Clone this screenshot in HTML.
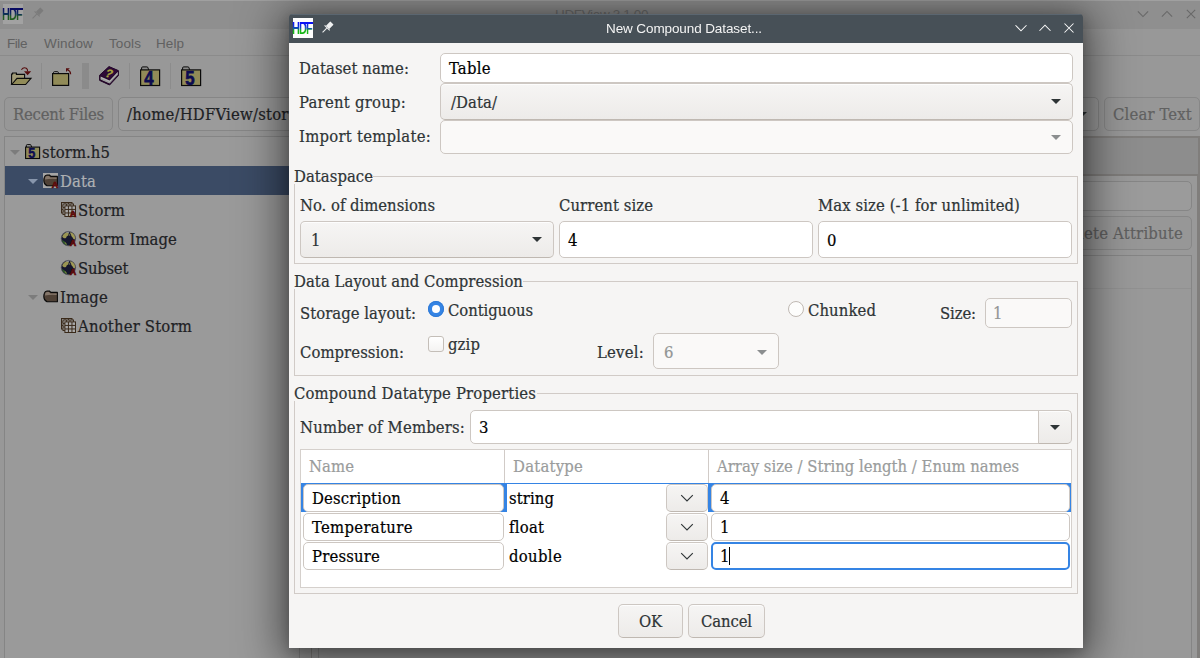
<!DOCTYPE html>
<html lang="en">
<head>
<meta charset="utf-8">
<title>New Compound Dataset...</title>
<style>
*{box-sizing:border-box;margin:0;padding:0}
html,body{width:1200px;height:658px;overflow:hidden;background:#989898}
body{position:relative;font-family:"DejaVu Serif Condensed","DejaVu Serif","Liberation Serif",serif;font-size:16.5px;line-height:20px;color:#2e3436;-webkit-text-stroke:.2px}
body *{position:absolute;white-space:nowrap}
.sans{font-family:"Liberation Sans","DejaVu Sans",sans-serif;font-size:13.5px;-webkit-text-stroke:0}
svg{overflow:visible;-webkit-text-stroke:0}
#bg{left:0;top:0;width:1200px;height:658px;overflow:hidden;color:#1e2124}
#top{left:0;top:0;width:0;height:0}
.bb{border:1px solid #878787;border-radius:5px;background:#979797;color:#6a6a6a}
.bf{border:1px solid #868686;border-radius:5px;background:#9b9b9b}
.vs{top:63px;width:1px;height:26px;background:#8c8c8c}
.mn{color:#616161}
#sh{left:291px;top:16px;width:790px;height:630px;background:#475057;border-radius:2px 2px 0 0;box-shadow:0 3px 12px 3px rgba(0,0,0,.17),0 6px 44px 10px rgba(0,0,0,.52)}
#dlg{left:0;top:0;width:1200px;height:658px;clip-path:inset(14px 117px 10px 289px round 4px 4px 0 0)}
.tb{background:#475057;border-top:1px solid #5b6670}
.e{background:#fff;border:1px solid #cdc7c2;border-radius:5px}
.b{background:linear-gradient(#f6f5f4,#edebe9);border:1px solid #cdc7c2;border-bottom-color:#bfb8b1;border-radius:5px;box-shadow:inset 0 1px rgba(255,255,255,.8)}
.d{background:#faf9f8;border:1px solid #cdc7c2;border-radius:5px}
.k{color:#000}
.g{color:#929595}
.h{color:#9a9c9c}
.l{background:#d1cbc7}
.ar{width:0;height:0;border-left:5px solid transparent;border-right:5px solid transparent;border-top:5px solid #2e3436}
.ag{border-top-color:#8b8e8f}
.bl{background:#3584e4}
.lg{font:bold 15.6px/20px "Liberation Sans","DejaVu Sans",sans-serif;letter-spacing:-1.3px;width:30px;height:20px;transform:scaleX(.7);transform-origin:0 0;background:linear-gradient(#0a12f5 22%,#0d45c0 45%,#14b414 58%);-webkit-background-clip:text;background-clip:text;color:transparent;-webkit-text-stroke:0;will-change:transform}
.lgd{background-image:linear-gradient(#070a62 22%,#0d2f5a 45%,#1f5a1f 58%)}
</style>
</head>
<body>
<div id="bg">
<div style="left:0px;top:0px;width:1200px;height:29px;background:#8f8f8f"></div>
<div style="left:0px;top:0px;width:1200px;height:1px;background:#a0a0a0"></div>
<div style="left:3px;top:4px;width:20px;height:20px;background:#a2a2a2"></div><div style="left:10px;top:8px;width:13px;height:2px;background:#070a62"></div>
<svg style="left:29.200000000000003px;top:6px" width="16" height="16" viewBox="0 0 16 16"><g transform="translate(8 8) scale(0.82) rotate(45) translate(-8 -8)" fill="#7b7b7b" stroke="none"><rect x="5.2" y="-0.5" width="5.6" height="7.6" rx="0.6"/><rect x="3.6" y="7.1" width="8.8" height="1.3"/><rect x="7.35" y="8.4" width="1.3" height="7.2"/></g></svg>
<div class="sans" style="left:555px;top:5px;letter-spacing:-0.353px;color:#6e6e6e">HDFView 3.1.00</div>
<svg style="left:1143px;top:14px" width="1" height="1"><path d="M-5.115 -2.5575 L0 2.5575 L5.115 -2.5575" fill="none" stroke="#686868" stroke-width="1.05"/></svg>
<svg style="left:1167px;top:14px" width="1" height="1"><path d="M-5.115 2.5575 L0 -2.5575 L5.115 2.5575" fill="none" stroke="#686868" stroke-width="1.05"/></svg>
<svg style="left:1191px;top:14px" width="1" height="1"><path d="M-4.1850000000000005 -4.1850000000000005 L4.1850000000000005 4.1850000000000005 M-4.1850000000000005 4.1850000000000005 L4.1850000000000005 -4.1850000000000005" fill="none" stroke="#686868" stroke-width="1.05"/></svg>
<div class="sans mn" style="left:7px;top:34px;letter-spacing:-0.441px">File</div>
<div class="sans mn" style="left:44px;top:34px;letter-spacing:0.164px">Window</div>
<div class="sans mn" style="left:109px;top:34px;letter-spacing:0.097px">Tools</div>
<div class="sans mn" style="left:156px;top:34px;letter-spacing:0.059px">Help</div>
<div style="left:0px;top:55px;width:1200px;height:1px;background:#8b8b8b"></div>
<div class="vs" style="left:41px"></div>
<div class="vs" style="left:129px"></div>
<div class="vs" style="left:170px"></div>
<div style="left:82px;top:63px;width:7px;height:26px;background:#8b8b8b"></div>
<svg style="left:11px;top:67px" width="20" height="18" viewBox="0 0 20 18"><path d="M.6 17.5 V7 H1.6 V6 H5.4 V7.4 H13.6 V11" fill="#a29c78" stroke="#0a0a0a" stroke-width="1.1"/><path d="M.7 17.5 L6 11.4 H20 L14.6 17.5 Z" fill="#918b58" stroke="#0a0a0a" stroke-width="1.1" stroke-linejoin="miter"/><path d="M10.4 2.8 Q12.5 -.2 15.3 1.3 Q16.8 2.4 16.6 4.4" fill="none" stroke="#560d0d" stroke-width="1.1"/><path d="M13 4.2 H20.2 L16.6 8.2 Z" fill="#560d0d"/></svg>
<svg style="left:52px;top:68px" width="20" height="18" viewBox="0 0 20 18"><path d="M1.5 5.8 V4.6 Q1.5 3.7 2.5 3.7 H5.4 Q6.4 3.7 6.4 4.6 L6.9 5.8" fill="#a6a6a6" stroke="#0a0a0a" stroke-width="1"/><rect x=".6" y="5.6" width="16" height="11.8" fill="#918b58" stroke="#0a0a0a" stroke-width="1.2"/><path d="M18.6 6.2 Q18.6 3 15.8 2" fill="none" stroke="#560d0d" stroke-width="1.2"/><path d="M14 .2 H17.8 L14 4 Z" fill="#560d0d"/></svg>
<svg style="left:99px;top:66px" width="20" height="20" viewBox="0 0 20 20"><path d="M.6 9.2 L10 .6 L19.4 4.6 V9.6 L10.6 19 L.6 14.4 Z" fill="#230628" stroke="#230628" stroke-width="1" stroke-linejoin="round"/><path d="M1.6 10.4 L10.6 14.4 L18.8 5.8 V8.8 L10.6 17.4 L1.6 13.4 Z" fill="#b0b0b0"/><path d="M1.6 12.6 L10.6 16.6 L18.8 8" fill="none" stroke="#8a8a8a" stroke-width=".7"/><path d="M.8 9.2 L10 .8 L19.2 4.7 L10.6 13.4 Z" fill="#2d0a36"/><g transform="translate(10.2 7.4) rotate(14) skewX(-12)"><text transform="translate(0 3.9) scale(1 1)" font-family="Liberation Sans,DejaVu Sans,sans-serif" font-weight="bold" font-size="11.5" text-anchor="middle" fill="#a8a23e" stroke="#a8a23e" stroke-width="0.3">?</text></g></svg>
<svg style="left:140px;top:66px" width="20" height="20" viewBox="0 0 20 20"><path d="M1.6 4 V2 Q1.6 .9 2.7 .9 H6.9 Q8 .9 8 2 L8.8 4" fill="#8a8a8a" stroke="#0a0a0a" stroke-width="1"/><rect x=".6" y="3.9" width="19" height="15.6" fill="#918b58" stroke="#0a0a0a" stroke-width="1.2"/><text transform="translate(8.9 19.3) scale(0.8 1)" font-family="Liberation Sans,DejaVu Sans,sans-serif" font-weight="bold" font-size="21" text-anchor="middle" fill="#0c0c50" stroke="#0c0c50" stroke-width="0.7">4</text></svg>
<svg style="left:181px;top:66px" width="20" height="20" viewBox="0 0 20 20"><path d="M1.6 4 V2 Q1.6 .9 2.7 .9 H6.9 Q8 .9 8 2 L8.8 4" fill="#8a8a8a" stroke="#0a0a0a" stroke-width="1"/><rect x=".6" y="3.9" width="19" height="15.6" fill="#918b58" stroke="#0a0a0a" stroke-width="1.2"/><text transform="translate(8.9 19.3) scale(0.8 1)" font-family="Liberation Sans,DejaVu Sans,sans-serif" font-weight="bold" font-size="21" text-anchor="middle" fill="#0c0c50" stroke="#0c0c50" stroke-width="0.7">5</text></svg>
<div class="bb" style="left:4px;top:97px;width:109px;height:34px"></div>
<div style="left:13px;top:105px;letter-spacing:-0.207px;color:#616161">Recent Files</div>
<div class="bf" style="left:118px;top:97px;width:981px;height:34px"></div>
<div style="left:127px;top:105px;letter-spacing:0.216px">/home/HDFView/storm.h5</div>
<div class="ar" style="left:1077px;top:112px"></div>
<div class="bb" style="left:1104px;top:97px;width:96px;height:34px"></div>
<div style="left:1113px;top:105px;letter-spacing:0.172px;color:#616161">Clear Text</div>
<div style="left:4px;top:136px;width:296px;height:524px;border:1px solid #858585;background:#9a9a9a"></div>
<div style="left:5px;top:166px;width:294px;height:29px;background:#3b4b65"></div>
<div style="left:42px;top:143px;letter-spacing:0.074px">storm.h5</div>
<div style="left:60px;top:172px;letter-spacing:0.109px;color:#aeb0b3">Data</div>
<div style="left:78px;top:201px;letter-spacing:0.150px">Storm</div>
<div style="left:78px;top:230px;letter-spacing:0.088px">Storm Image</div>
<div style="left:78px;top:259px;letter-spacing:-0.249px">Subset</div>
<div style="left:60px;top:288px;letter-spacing:0.184px">Image</div>
<div style="left:78px;top:317px;letter-spacing:0.186px">Another Storm</div>
<div class="ar" style="left:10px;top:150px;border-top-color:#7c7c7c"></div>
<div class="ar" style="left:28px;top:179px;border-top-color:#8896ac"></div>
<div class="ar" style="left:28px;top:295px;border-top-color:#7c7c7c"></div>
<svg style="left:25px;top:144px" width="15" height="15" viewBox="0 0 15 15"><path d="M1.4 3 V1.5 Q1.4 .6 2.2 .6 H5.3 Q6.1 .6 6.1 1.5 L6.6 3" fill="#9a9a9a" stroke="#0a0a0a" stroke-width="1"/><rect x=".6" y="3.1" width="14" height="11.4" fill="#918b58" stroke="#0a0a0a" stroke-width="1.1"/><text transform="translate(6.9 14.3) scale(0.82 1)" font-family="Liberation Sans,DejaVu Sans,sans-serif" font-weight="bold" font-size="15.5" text-anchor="middle" fill="#0c0c50" stroke="#0c0c50" stroke-width="0.5">5</text></svg>
<svg style="left:43px;top:173px" width="15" height="15" viewBox="0 0 15 15"><rect x="0" y="0" width="15" height="15" fill="#a6a6a6"/><path d="M1.4 4.2 Q2 2 4 2 H6.4 L7.8 3.4 H14.4 V12.8 H4 Q.8 11 .8 7.4 Q.8 5.6 1.4 4.2 Z" fill="#4f4136" stroke="#0a0a0a" stroke-width="1.1" stroke-linejoin="round"/><path d="M2.2 4.6 Q2.6 3 4 3 H6 L7.4 4.4 H13.6 V6 Q8 5.4 2 6.4 Z" fill="#85776b"/><text transform="translate(11.9 15.1) scale(0.95 1)" font-family="Liberation Sans,DejaVu Sans,sans-serif" font-weight="bold" font-size="9.4" text-anchor="middle" fill="#5e0b0b" stroke="#5e0b0b" stroke-width="0.7">A</text></svg>
<svg style="left:61px;top:202px" width="15" height="15" viewBox="0 0 15 15"><rect x="0.5" y="0.5" width="10.5" height="10.5" fill="#a4a4a4" stroke="#3a2a1a" stroke-width="1"/><path d="M4.0 0.5 V11.0 M0.5 4.0 H11.0" stroke="#3a2a1a" stroke-width=".9" fill="none"/><path d="M7.5 0.5 V11.0 M0.5 7.5 H11.0" stroke="#3a2a1a" stroke-width=".9" fill="none"/><rect x="2" y="2" width="10.5" height="10.5" fill="#a4a4a4" stroke="#3a2a1a" stroke-width="1"/><path d="M5.5 2 V12.5 M2 5.5 H12.5" stroke="#3a2a1a" stroke-width=".9" fill="none"/><path d="M9.0 2 V12.5 M2 9.0 H12.5" stroke="#3a2a1a" stroke-width=".9" fill="none"/><rect x="3.9" y="3.9" width="10.6" height="10.6" fill="#a9a9a9" stroke="#3a2a1a" stroke-width="1"/><path d="M7.43 3.9 V14.5 M3.9 7.43 H14.5" stroke="#3a2a1a" stroke-width="1" fill="none"/><path d="M10.96 3.9 V14.5 M3.9 10.96 H14.5" stroke="#3a2a1a" stroke-width="1" fill="none"/><text transform="translate(11.9 15.1) scale(0.95 1)" font-family="Liberation Sans,DejaVu Sans,sans-serif" font-weight="bold" font-size="9.4" text-anchor="middle" fill="#5e0b0b" stroke="#5e0b0b" stroke-width="0.7">A</text></svg>
<svg style="left:61px;top:231px" width="15" height="15" viewBox="0 0 15 15"><circle cx="7.4" cy="7.6" r="7.2" fill="#15162e"/><path d="M1.2 5.6 Q2.2 2.4 5.2 1.2 Q7.2 .8 8 2 Q7 3 7.2 4.6 Q5.6 5 5 7 Q3.6 7.6 2.6 7 Q1.4 6.6 1.2 5.6 Z" fill="#9a9553"/><path d="M9.2 1 Q12.4 1.8 13.8 4.6 Q14.6 6.6 13.8 8.4 Q12.2 8.2 11.6 6.4 Q10.2 5.6 10 3.8 Q9 2.6 9.2 1 Z" fill="#a19b58"/><path d="M7.6 2.6 Q9 3 9.4 4.4 Q8.4 5 7.6 4.2 Z" fill="#6f6f52"/><path d="M.8 9 Q2.6 9.4 4 11 Q5.8 12 6.2 14.4 Q2.2 13.4 .8 9 Z" fill="#2c5a29"/><path d="M3.2 10.6 Q5 11.4 6 13.6 L4.6 13.2 Q4.2 11.8 3.2 10.6 Z" fill="#8d8847"/><path d="M4.4 1.2 Q6.6 .2 9 .6 L7.4 1.9 Z" fill="#8f949e"/><circle cx="7.4" cy="7.6" r="7.2" fill="none" stroke="#55555c" stroke-width=".7"/><text transform="translate(11.9 15.1) scale(0.95 1)" font-family="Liberation Sans,DejaVu Sans,sans-serif" font-weight="bold" font-size="9.4" text-anchor="middle" fill="#5e0b0b" stroke="#5e0b0b" stroke-width="0.7">A</text></svg>
<svg style="left:61px;top:260px" width="15" height="15" viewBox="0 0 15 15"><circle cx="7.4" cy="7.6" r="7.2" fill="#15162e"/><path d="M1.2 5.6 Q2.2 2.4 5.2 1.2 Q7.2 .8 8 2 Q7 3 7.2 4.6 Q5.6 5 5 7 Q3.6 7.6 2.6 7 Q1.4 6.6 1.2 5.6 Z" fill="#9a9553"/><path d="M9.2 1 Q12.4 1.8 13.8 4.6 Q14.6 6.6 13.8 8.4 Q12.2 8.2 11.6 6.4 Q10.2 5.6 10 3.8 Q9 2.6 9.2 1 Z" fill="#a19b58"/><path d="M7.6 2.6 Q9 3 9.4 4.4 Q8.4 5 7.6 4.2 Z" fill="#6f6f52"/><path d="M.8 9 Q2.6 9.4 4 11 Q5.8 12 6.2 14.4 Q2.2 13.4 .8 9 Z" fill="#2c5a29"/><path d="M3.2 10.6 Q5 11.4 6 13.6 L4.6 13.2 Q4.2 11.8 3.2 10.6 Z" fill="#8d8847"/><path d="M4.4 1.2 Q6.6 .2 9 .6 L7.4 1.9 Z" fill="#8f949e"/><circle cx="7.4" cy="7.6" r="7.2" fill="none" stroke="#55555c" stroke-width=".7"/><text transform="translate(11.9 15.1) scale(0.95 1)" font-family="Liberation Sans,DejaVu Sans,sans-serif" font-weight="bold" font-size="9.4" text-anchor="middle" fill="#5e0b0b" stroke="#5e0b0b" stroke-width="0.7">A</text></svg>
<svg style="left:43px;top:289px" width="15" height="15" viewBox="0 0 15 15"><path d="M1.4 4.2 Q2 2 4 2 H6.4 L7.8 3.4 H14.4 V12.8 H4 Q.8 11 .8 7.4 Q.8 5.6 1.4 4.2 Z" fill="#4f4136" stroke="#0a0a0a" stroke-width="1.1" stroke-linejoin="round"/><path d="M2.2 4.6 Q2.6 3 4 3 H6 L7.4 4.4 H13.6 V6 Q8 5.4 2 6.4 Z" fill="#85776b"/></svg>
<svg style="left:61px;top:318px" width="15" height="15" viewBox="0 0 15 15"><rect x="0.5" y="0.5" width="10.5" height="10.5" fill="#a4a4a4" stroke="#3a2a1a" stroke-width="1"/><path d="M4.0 0.5 V11.0 M0.5 4.0 H11.0" stroke="#3a2a1a" stroke-width=".9" fill="none"/><path d="M7.5 0.5 V11.0 M0.5 7.5 H11.0" stroke="#3a2a1a" stroke-width=".9" fill="none"/><rect x="2" y="2" width="10.5" height="10.5" fill="#a4a4a4" stroke="#3a2a1a" stroke-width="1"/><path d="M5.5 2 V12.5 M2 5.5 H12.5" stroke="#3a2a1a" stroke-width=".9" fill="none"/><path d="M9.0 2 V12.5 M2 9.0 H12.5" stroke="#3a2a1a" stroke-width=".9" fill="none"/><rect x="3.9" y="3.9" width="10.6" height="10.6" fill="#a9a9a9" stroke="#3a2a1a" stroke-width="1"/><path d="M7.43 3.9 V14.5 M3.9 7.43 H14.5" stroke="#3a2a1a" stroke-width="1" fill="none"/><path d="M10.96 3.9 V14.5 M3.9 10.96 H14.5" stroke="#3a2a1a" stroke-width="1" fill="none"/></svg>
<div style="left:311px;top:136px;width:889px;height:524px;border:1px solid #807e7c;border-top-width:2px;border-right-width:2px;background:#8d8d8d"></div>
<div style="left:312px;top:174px;width:886px;height:2px;background:#7f7d7b"></div>
<div style="left:312px;top:176px;width:886px;height:484px;background:#999;border-right:1px solid #807e7c"></div>
<div class="bf" style="left:318px;top:181px;width:874px;height:30px"></div>
<div class="bb" style="left:1049px;top:216px;width:143px;height:34px"></div>
<div style="left:1058px;top:224px;letter-spacing:0.208px;color:#5f5f5f">Delete Attribute</div>
<div style="left:318px;top:255px;width:874px;height:405px;border:1px solid #858585;background:#999"></div>
<div style="left:319px;top:288px;width:872px;height:1px;background:#919191"></div>
</div>
<div id="sh"></div>
<div id="dlg">
<div style="left:289px;top:43px;width:794px;height:605px;background:#f6f5f4"></div>
<div class="tb" style="left:289px;top:14px;width:794px;height:29px"></div>
<div style="left:293px;top:18px;width:20px;height:20px;background:#fdfdfd"></div><div style="left:300px;top:22px;width:13px;height:2px;background:#0a12f5"></div>
<svg style="left:319.2px;top:20px" width="16" height="16" viewBox="0 0 16 16"><g transform="translate(8 8) scale(0.82) rotate(45) translate(-8 -8)" fill="#eff0f1" stroke="none"><rect x="5.2" y="-0.5" width="5.6" height="7.6" rx="0.6"/><rect x="3.6" y="7.1" width="8.8" height="1.3"/><rect x="7.35" y="8.4" width="1.3" height="7.2"/></g></svg>
<svg style="left:1021px;top:28px" width="1" height="1"><path d="M-5.5 -2.75 L0 2.75 L5.5 -2.75" fill="none" stroke="#fcfcfc" stroke-width="1.05"/></svg>
<svg style="left:1045px;top:28px" width="1" height="1"><path d="M-5.5 2.75 L0 -2.75 L5.5 2.75" fill="none" stroke="#fcfcfc" stroke-width="1.05"/></svg>
<svg style="left:1069px;top:28px" width="1" height="1"><path d="M-4.5 -4.5 L4.5 4.5 M-4.5 4.5 L4.5 -4.5" fill="none" stroke="#fcfcfc" stroke-width="1.05"/></svg>
<div style="left:299px;top:59px;letter-spacing:0.084px">Dataset name:</div>
<div class="e" style="left:440px;top:53px;width:633px;height:30px"></div>
<div class="k" style="left:449px;top:59px;letter-spacing:0.250px">Table</div>
<div style="left:299px;top:93px;letter-spacing:0.245px">Parent group:</div>
<div class="b" style="left:440px;top:83px;width:633px;height:37px"></div>
<div style="left:451px;top:93px;letter-spacing:0.073px">/Data/</div>
<div class="ar" style="left:1051px;top:99px"></div>
<div style="left:299px;top:127px;letter-spacing:0.262px">Import template:</div>
<div class="d" style="left:440px;top:120px;width:633px;height:34px"></div>
<div class="ar ag" style="left:1051px;top:135px"></div>
<div style="left:294px;top:167px;letter-spacing:0.043px">Dataspace</div>
<div class="l" style="left:372px;top:176px;width:706px;height:1px"></div>
<div class="l" style="left:294px;top:184px;width:1px;height:80px"></div>
<div class="l" style="left:1077px;top:176px;width:1px;height:88px"></div>
<div class="l" style="left:294px;top:263px;width:784px;height:1px"></div>
<div style="left:300px;top:196px;letter-spacing:-0.020px">No. of dimensions</div>
<div style="left:559px;top:196px;letter-spacing:0.074px">Current size</div>
<div style="left:818px;top:196px;letter-spacing:0.093px">Max size (-1 for unlimited)</div>
<div class="b" style="left:300px;top:221px;width:254px;height:37px"></div>
<div style="left:311px;top:231px;letter-spacing:-0.453px">1</div>
<div class="ar" style="left:532px;top:237px"></div>
<div class="e" style="left:559px;top:221px;width:254px;height:37px"></div>
<div class="k" style="left:568px;top:231px;letter-spacing:-0.453px">4</div>
<div class="e" style="left:818px;top:221px;width:254px;height:37px"></div>
<div class="k" style="left:827px;top:231px;letter-spacing:-0.453px">0</div>
<div style="left:294px;top:272px;letter-spacing:0.060px">Data Layout and Compression</div>
<div class="l" style="left:523px;top:281px;width:555px;height:1px"></div>
<div class="l" style="left:294px;top:289px;width:1px;height:87px"></div>
<div class="l" style="left:1077px;top:281px;width:1px;height:95px"></div>
<div class="l" style="left:294px;top:375px;width:784px;height:1px"></div>
<div style="left:300px;top:304px;letter-spacing:0.036px">Storage layout:</div>
<svg style="left:428px;top:301px" width="16" height="16"><circle cx="8" cy="8" r="8" fill="#3584e4"/><circle cx="8" cy="8" r="7.5" fill="none" stroke="#2f7ad6" stroke-width="1"/><circle cx="8" cy="8" r="4" fill="#fff"/></svg>
<div style="left:448px;top:301px;letter-spacing:-0.075px">Contiguous</div>
<svg style="left:788px;top:301px" width="16" height="16"><circle cx="8" cy="8" r="7.5" fill="#fdfdfc" stroke="#c0b9b3" stroke-width="1"/></svg>
<div style="left:808px;top:301px;letter-spacing:0.096px">Chunked</div>
<div style="left:940px;top:304px;letter-spacing:-0.106px">Size:</div>
<div class="d" style="left:985px;top:298px;width:87px;height:30px"></div>
<div class="g" style="left:993px;top:304px;letter-spacing:-0.453px">1</div>
<div style="left:300px;top:343px;letter-spacing:0.064px">Compression:</div>
<div class="e" style="left:428px;top:336px;width:16px;height:16px;border-radius:3px;border-color:#c4beb8;background:linear-gradient(#fff,#f4f3f2)"></div>
<div style="left:448px;top:335px;letter-spacing:0.105px">gzip</div>
<div style="left:597px;top:343px;letter-spacing:0.240px">Level:</div>
<div class="d" style="left:653px;top:333px;width:126px;height:36px"></div>
<div class="g" style="left:664px;top:343px;letter-spacing:-0.453px">6</div>
<div class="ar ag" style="left:757px;top:350px"></div>
<div style="left:294px;top:384px;letter-spacing:0.159px">Compound Datatype Properties</div>
<div class="l" style="left:537px;top:393px;width:541px;height:1px"></div>
<div class="l" style="left:294px;top:401px;width:1px;height:193px"></div>
<div class="l" style="left:1077px;top:393px;width:1px;height:201px"></div>
<div class="l" style="left:294px;top:593px;width:784px;height:1px"></div>
<div style="left:300px;top:418px;letter-spacing:0.171px">Number of Members:</div>
<div class="e" style="left:470px;top:410px;width:570px;height:34px;border-radius:5px 0 0 5px"></div>
<div class="k" style="left:479px;top:418px;letter-spacing:-0.453px">3</div>
<div class="b" style="left:1038px;top:410px;width:34px;height:34px;border-radius:0 5px 5px 0"></div>
<div class="ar" style="left:1050px;top:425px"></div>
<div style="left:300px;top:449px;width:772px;height:139px;background:#fff;border:1px solid #d5d0cc"></div>
<div class="l" style="left:504px;top:450px;width:1px;height:33px"></div>
<div class="l" style="left:708px;top:450px;width:1px;height:33px"></div>
<div class="h" style="left:309px;top:457px;letter-spacing:0.074px">Name</div>
<div class="h" style="left:513px;top:457px;letter-spacing:0.227px">Datatype</div>
<div class="h" style="left:717px;top:457px">Array size / String length / Enum names</div>
<div class="bl" style="left:301px;top:483px;width:770px;height:29px"></div>
<div style="left:507px;top:484px;width:201px;height:28px;background:#fff"></div>
<div class="e" style="left:303px;top:484px;width:201px;height:28px"></div>
<div class="k" style="left:312px;top:489px;letter-spacing:0.166px">Description</div>
<div class="k" style="left:509px;top:489px;letter-spacing:0.086px">string</div>
<div class="b" style="left:666px;top:484px;width:42px;height:28px"></div>
<svg style="left:679px;top:490px" width="16" height="16" viewBox="0 0 16 16"><path d="M2.2 5.1 L8 10.9 L13.8 5.1" fill="none" stroke="#2e3436" stroke-width="1.1"/></svg>
<div class="e" style="left:711px;top:484px;width:359px;height:28px"></div>
<div class="k" style="left:720px;top:489px;letter-spacing:-0.453px">4</div>
<div class="e" style="left:303px;top:513px;width:201px;height:28px"></div>
<div class="k" style="left:312px;top:518px;letter-spacing:0.336px">Temperature</div>
<div class="k" style="left:509px;top:518px;letter-spacing:0.269px">float</div>
<div class="b" style="left:666px;top:513px;width:42px;height:28px"></div>
<svg style="left:679px;top:519px" width="16" height="16" viewBox="0 0 16 16"><path d="M2.2 5.1 L8 10.9 L13.8 5.1" fill="none" stroke="#2e3436" stroke-width="1.1"/></svg>
<div class="e" style="left:711px;top:513px;width:359px;height:28px"></div>
<div class="k" style="left:720px;top:518px;letter-spacing:-0.453px">1</div>
<div class="e" style="left:303px;top:542px;width:201px;height:28px"></div>
<div class="k" style="left:312px;top:547px;letter-spacing:0.182px">Pressure</div>
<div class="k" style="left:509px;top:547px;letter-spacing:0.328px">double</div>
<div class="b" style="left:666px;top:542px;width:42px;height:28px"></div>
<svg style="left:679px;top:548px" width="16" height="16" viewBox="0 0 16 16"><path d="M2.2 5.1 L8 10.9 L13.8 5.1" fill="none" stroke="#2e3436" stroke-width="1.1"/></svg>
<div class="e" style="left:711px;top:542px;width:359px;height:28px;border:2px solid #3584e4"></div>
<div class="k" style="left:729px;top:547px;width:1px;height:18px;background:#000"></div>
<div class="k" style="left:720px;top:547px;letter-spacing:-0.453px">1</div>
<div class="b" style="left:618px;top:604px;width:65px;height:34px"></div>
<div style="left:639px;top:612px;letter-spacing:-0.141px">OK</div>
<div class="b" style="left:688px;top:604px;width:77px;height:34px"></div>
<div style="left:701px;top:612px;letter-spacing:-0.104px">Cancel</div>
</div>
<div id="top">
<div class="lg lgd" style="left:2px;top:5px">HDF</div>
<div class="lg" style="left:292px;top:19px">HDF</div>
<div class="sans" style="left:606px;top:19px;letter-spacing:-0.102px;color:#f4f4f4;will-change:transform">New Compound Dataset...</div>
</div>
</body>
</html>
